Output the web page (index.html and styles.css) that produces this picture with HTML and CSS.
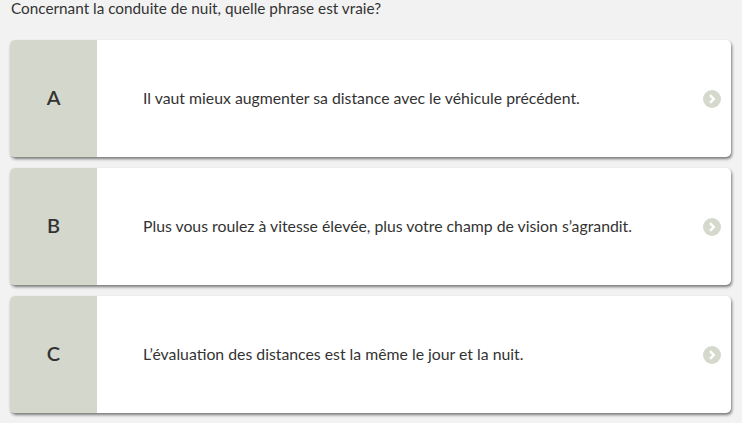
FILE: index.html
```html
<!DOCTYPE html>
<html lang="fr">
<head>
<meta charset="utf-8">
<link rel="stylesheet" href="styles.css">
</head>
<body>
<div class="page">
  <p class="question">Concernant la conduite de nuit, quelle phrase est vraie?</p>
  <div class="answers">
    <div class="card">
      <div class="letter">A</div>
      <div class="text">Il vaut mieux augmenter sa distance avec le véhicule précédent.</div>
      <div class="arrow"><svg viewBox="0 0 18 18" width="18" height="18"><circle cx="9" cy="9" r="9" fill="#d5d8cd"/><path d="M7 5.2 L10.8 9 L7 12.8" fill="none" stroke="#fff" stroke-width="2.4"/></svg></div>
    </div>
    <div class="card">
      <div class="letter">B</div>
      <div class="text">Plus vous roulez à vitesse élevée, plus votre champ de vision s’agrandit.</div>
      <div class="arrow"><svg viewBox="0 0 18 18" width="18" height="18"><circle cx="9" cy="9" r="9" fill="#d5d8cd"/><path d="M7 5.2 L10.8 9 L7 12.8" fill="none" stroke="#fff" stroke-width="2.4"/></svg></div>
    </div>
    <div class="card">
      <div class="letter">C</div>
      <div class="text">L’évaluation des distances est la même le jour et la nuit.</div>
      <div class="arrow"><svg viewBox="0 0 18 18" width="18" height="18"><circle cx="9" cy="9" r="9" fill="#d5d8cd"/><path d="M7 5.2 L10.8 9 L7 12.8" fill="none" stroke="#fff" stroke-width="2.4"/></svg></div>
    </div>
  </div>
</div>
</body>
</html>
```

FILE: styles.css
```css
html, body {
  margin: 0;
  padding: 0;
  background: #ffffff;
}
.page {
  background: #f2f2f2;
  height: 423px;
  box-sizing: border-box;
  padding: 0 11px 0 10px;
  font-family: Lato, "Liberation Sans", sans-serif;
  color: #333333;
}
.question {
  margin: 0;
  padding: 0 0 0 1px;
  font-size: 15.3px;
  line-height: 17px;
  height: 40px;
  box-sizing: border-box;
}
.answers {
  display: flex;
  flex-direction: column;
  gap: 11px;
}
.card {
  display: flex;
  align-items: center;
  height: 117px;
  background: #ffffff;
  border-radius: 5px;
  overflow: hidden;
  box-shadow: 1px 2px 3px rgba(0, 0, 0, 0.5);
}
.letter {
  width: 87px;
  align-self: stretch;
  background: #d4d7cc;
  display: flex;
  align-items: center;
  justify-content: center;
  font-size: 20px;
  font-weight: 600;
  color: #333333;
  flex-shrink: 0;
  padding-bottom: 3px;
  box-sizing: border-box;
}
.text {
  flex: 1;
  padding-left: 46px;
  padding-bottom: 2px;
  font-size: 15.8px;
  color: #333333;
}
.arrow {
  width: 18px;
  height: 18px;
  margin-right: 10px;
  display: flex;
}
```
